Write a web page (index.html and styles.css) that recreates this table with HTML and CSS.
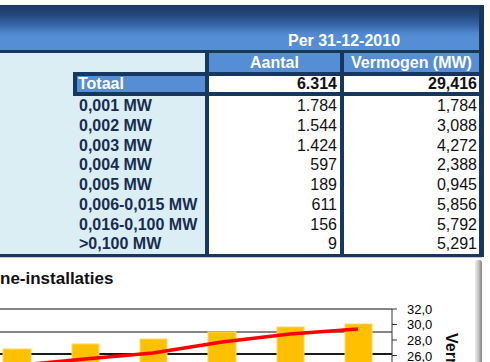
FILE: index.html
```html
<!DOCTYPE html>
<html lang="nl">
<head>
    <meta charset="UTF-8">
    <meta name="viewport" content="width=device-width, initial-scale=1.0">
    <title>Zonne-installaties | Overzicht</title>
    <link rel="stylesheet" href="styles.css">
</head>
<body>
    <div class="sheet">
        <div class="banner">
            <div class="banner-title">Per 31-12-2010</div>
        </div>

        <div class="table">
            <div class="pane"></div>
            <div class="head">Aantal</div>
            <div class="head">Vermogen (MW)</div>

            <div class="total-label">Totaal</div>
            <div class="cell total">6.314</div>
            <div class="cell mw total">29,416</div>

            <div class="pane labels">
                <div>0,001 MW</div>
                <div>0,002 MW</div>
                <div>0,003 MW</div>
                <div>0,004 MW</div>
                <div>0,005 MW</div>
                <div>0,006-0,015 MW</div>
                <div>0,016-0,100 MW</div>
                <div>&gt;0,100 MW</div>
            </div>
            <div class="cell values">
                <div>1.784</div>
                <div>1.544</div>
                <div>1.424</div>
                <div>597</div>
                <div>189</div>
                <div>611</div>
                <div>156</div>
                <div>9</div>
            </div>
            <div class="cell mw values">
                <div>1,784</div>
                <div>3,088</div>
                <div>4,272</div>
                <div>2,388</div>
                <div>0,945</div>
                <div>5,856</div>
                <div>5,792</div>
                <div>5,291</div>
            </div>
        </div>
    </div>

    <div class="chart">
        <div class="chart-main">
            <h2 class="chart-title">ne-installaties</h2>
            <svg class="chart-plot" viewBox="0 0 475 80" width="475" height="80">
                <!-- gridlines -->
                <line class="grid" x1="0" y1="21" x2="392" y2="21"/>
                <line class="grid" x1="0" y1="44" x2="392" y2="44"/>
                <line class="base" x1="0" y1="66" x2="392" y2="66"/>

                <!-- aantal per jaar -->
                <rect class="bar" x="3" y="61" width="28" height="30"/>
                <rect class="bar" x="72" y="56" width="27" height="30"/>
                <rect class="bar" x="140" y="51" width="27" height="35"/>
                <rect class="bar" x="208" y="44" width="28" height="40"/>
                <rect class="bar" x="277" y="39" width="27" height="45"/>
                <rect class="bar" x="345" y="36" width="27" height="50"/>

                <!-- vermogen -->
                <polyline class="trend" points="17,77.4 85,71 153,65 222,54 290,46 358,41"/>

                <!-- rechter as -->
                <line class="axis" x1="392" y1="21" x2="392" y2="80"/>
                <line class="axis" x1="392" y1="21" x2="397" y2="21"/>
                <line class="axis" x1="392" y1="36.5" x2="397" y2="36.5"/>
                <line class="axis" x1="392" y1="52" x2="397" y2="52"/>
                <line class="axis" x1="392" y1="67.5" x2="397" y2="67.5"/>
                <text class="tick" x="407" y="25.6">32,0</text>
                <text class="tick" x="407" y="40.6">30,0</text>
                <text class="tick" x="407" y="56.6">28,0</text>
                <text class="tick" x="407" y="72.6">26,0</text>
                <text class="axis-title" transform="translate(445.5 45) rotate(90)">Vermogen (MW)</text>
            </svg>
        </div>
        <div class="chart-edge"></div>
    </div>
</body>
</html>
```

FILE: styles.css
```css
body {
    font-family: "Liberation Sans", Arial, sans-serif;
    background-color: #ffffff;
    margin: 0;
    padding: 0;
    overflow: hidden;
}

.sheet {
    width: 479px;
    margin-top: 5px;
    border-right: 5px solid #17375e; /* dark frame on the right */
}

.banner {
    height: 45px;
    display: flex;
    align-items: flex-end;
    background: linear-gradient(#1c3761 0, #24487c 10px, #3766a8 20px, #4f86cd 28px, #558ed5 33px);
}

.banner-title {
    margin-left: 209px;
    width: 270px;
    text-align: center;
    color: #ffffff;
    font-size: 16px;
    font-weight: bold;
    line-height: 18px;
}

.table {
    display: grid;
    grid-template-columns: 205px 131px 135px;
    grid-template-rows: 19px 16px 158px;
    gap: 4px;
    /* light pane on the left, dark lines everywhere else */
    background: linear-gradient(to right, #daeef3 73px, #17375e 73px);
    border-top: 3px solid #17375e;
    border-bottom: 3px solid #17375e;
    font-size: 16px;
}

.pane {
    background-color: #daeef3;
}

.head {
    background-color: #558ed5;
    color: #ffffff;
    font-weight: bold;
    line-height: 19px;
    text-align: center;
}

.total-label {
    margin-left: 73px;
    border-left: 4px solid #17375e;
    padding-left: 1px;
    background-color: #558ed5;
    color: #ffffff;
    font-weight: bold;
    line-height: 16px;
}

.cell {
    background-color: #ffffff;
    color: #111111;
    text-align: right;
    padding-right: 3px;
}

.cell.mw {
    padding-right: 2px;
}

.cell.total {
    font-weight: bold;
    line-height: 16px;
}

.labels {
    padding-left: 79px;
    color: #172c50;
    font-weight: bold;
}

.labels div,
.values div {
    height: 19.75px;
    line-height: 19.75px;
}

.chart {
    display: flex;
    width: 482px;
    height: 104px;
    border-top: 1px solid #c9c9c9;
    overflow: hidden;
}

.chart-main {
    flex: 1;
}

.chart-title {
    margin: 0;
    padding-top: 12px;
    font-size: 17px;
    font-weight: bold;
    line-height: 18px;
    color: #111111;
}

.chart-plot {
    display: block;
}

.chart-plot .grid {
    stroke: #858585;
    stroke-width: 2;
}

.chart-plot .base {
    stroke: #1a1a1a;
    stroke-width: 2;
}

.chart-plot .bar {
    fill: #ffc000;
    stroke: #ffd75e;
    stroke-width: 1;
}

.chart-plot .trend {
    fill: none;
    stroke: #ff0000;
    stroke-width: 3.5;
    stroke-linejoin: round;
}

.chart-plot .axis {
    stroke: #333333;
    stroke-width: 1;
}

.chart-plot .tick {
    font-family: "Liberation Sans", Arial, sans-serif;
    font-size: 13px;
    fill: #000000;
}

.chart-plot .axis-title {
    font-family: "Liberation Sans", Arial, sans-serif;
    font-size: 16px;
    font-weight: bold;
    fill: #111111;
}

.chart-edge {
    width: 7px;
    margin-top: 2px;
    border-radius: 3px 3px 0 0;
    background: linear-gradient(to right, #efefef, #bdbdbd 55%, #808080);
}
```
